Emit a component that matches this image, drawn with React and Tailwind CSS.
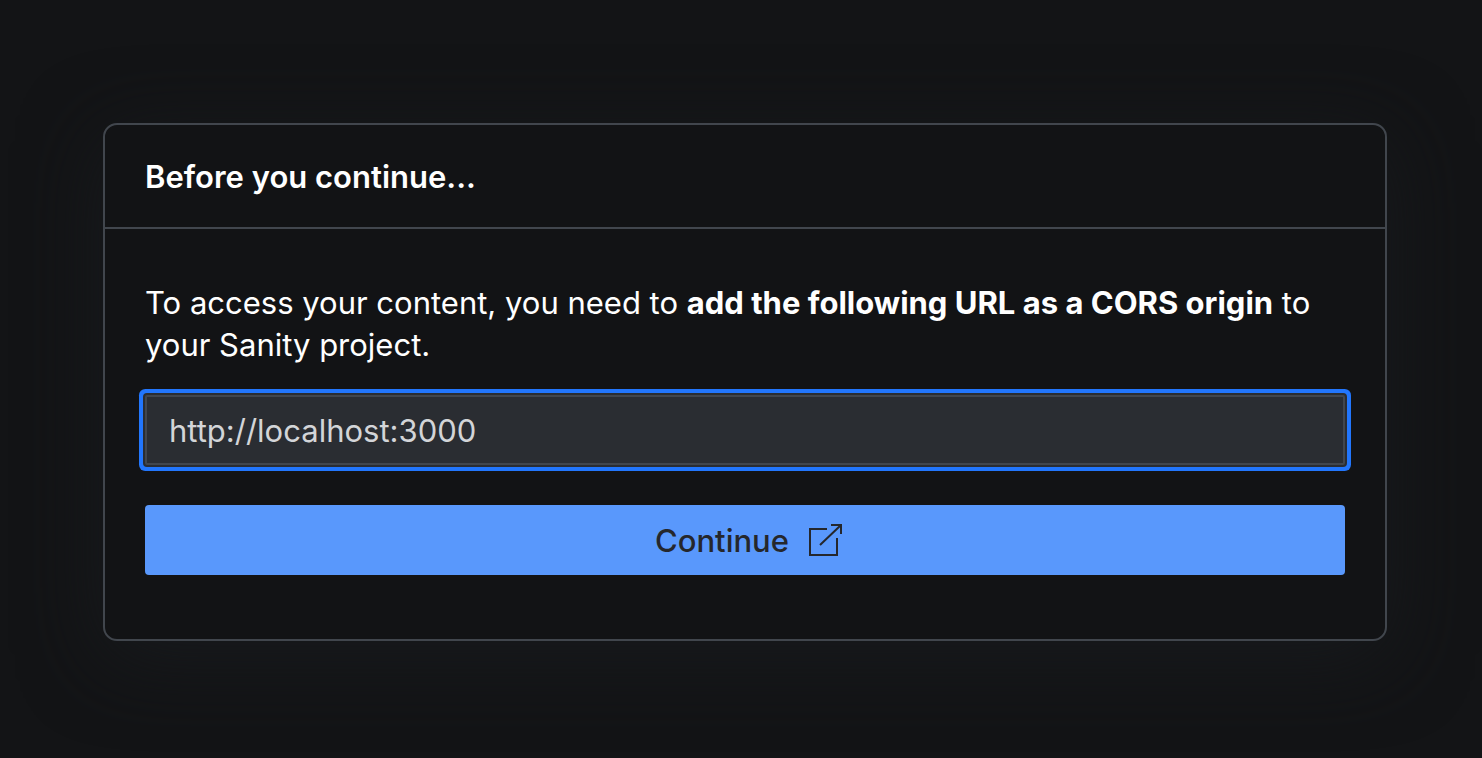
import { useState } from 'react';

const LaunchIcon = () => (
  <svg
    className="h-9 w-9 shrink-0"
    viewBox="0 0 36 36"
    fill="none"
    stroke="currentColor"
    strokeWidth="2"
    aria-hidden="true"
  >
    <path d="M20 6H3V32H30V15" />
    <path d="M13 22L34 2M24 2H34V11" />
  </svg>
);

const App = () => {
  const [origin, setOrigin] = useState('http://localhost:3000');

  const handleSubmit = (e) => {
    e.preventDefault();
  };

  return (
    <main className="min-h-screen bg-[#131416] pt-[123px] pb-[117px] pl-[103px] pr-[95px] font-['Inter',sans-serif] text-[31px] leading-[42px] text-white">
      <section className="rounded-[14px] border-2 border-[#41464d] bg-[#121315] shadow-[0_16px_80px_#181a1d]">
        <header className="border-b-2 border-[#41464d] px-10 pt-[31px] pb-[29px]">
          <h1 className="font-semibold">Before you continue...</h1>
        </header>

        <form onSubmit={handleSubmit} className="px-10 pt-[53px] pb-16">
          <label htmlFor="origin" className="block">
            To access your content, you need to{' '}
            <strong className="font-bold">add the following URL as a CORS origin</strong> to your
            Sanity project.
          </label>

          <input
            id="origin"
            type="text"
            value={origin}
            onChange={(e) => setOrigin(e.target.value)}
            className="mt-[29px] block h-[70px] w-full rounded-[2px] border-2 border-[#41464d] bg-[#2a2d32] px-[22px] text-[#d3d5d8] shadow-[0_0_0_2px_#2a2d32,0_0_0_6px_#2276fc] outline-none"
          />

          <button
            type="submit"
            className="mt-10 flex h-[70px] w-full items-center justify-center gap-[18px] rounded-[4px] bg-[#5998fc] pt-[2px] pl-2 font-medium text-[#25272c]"
          >
            Continue
            <LaunchIcon />
          </button>
        </form>
      </section>
    </main>
  );
};

export default App;
